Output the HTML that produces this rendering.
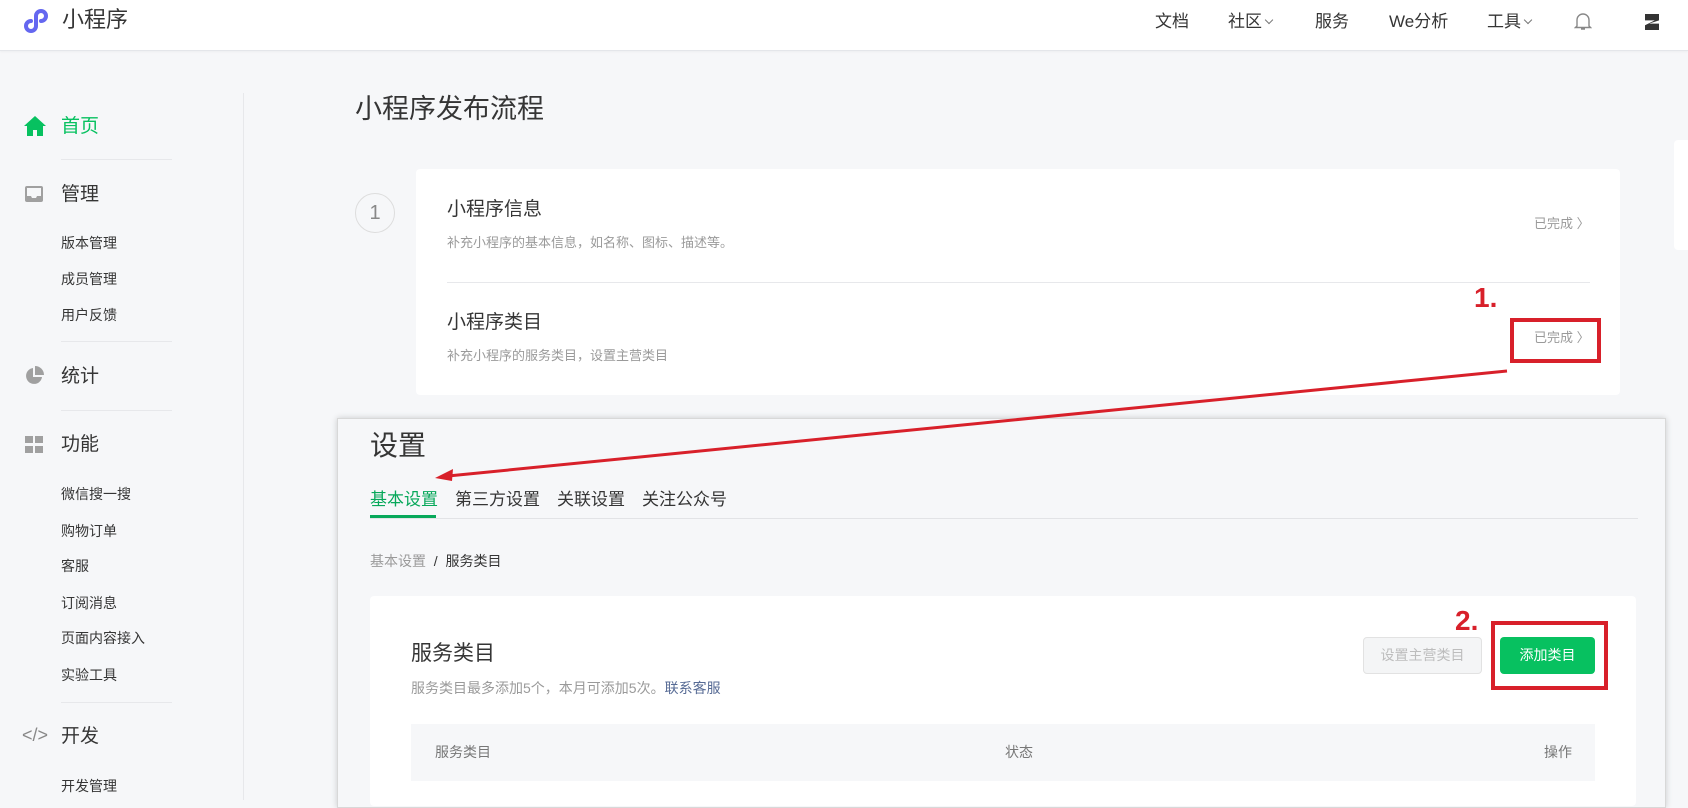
<!DOCTYPE html>
<html><head><meta charset="utf-8"><style>
*{margin:0;padding:0;box-sizing:border-box}
body{width:1688px;height:800px;overflow:hidden;background:#f6f7f9;font-family:"Liberation Sans","Noto Sans CJK SC",sans-serif;color:#353535;position:relative}
.a{position:absolute;white-space:nowrap;line-height:1}
.hdr{position:absolute;left:0;top:0;width:1688px;height:51px;background:#fff;border-bottom:1px solid #e4e6ea;box-shadow:0 1px 2px rgba(0,0,0,.04)}
.nav{font-size:17px;color:#353535;top:13px}
.car{display:inline-block;width:6px;height:6px;border-right:1px solid #777;border-bottom:1px solid #777;transform:rotate(45deg);margin-left:4px;position:relative;top:-4px}
.m{font-size:19px;color:#353535}
.s{font-size:14px;color:#353535}
.dv{position:absolute;left:61px;width:111px;height:1px;background:#e7e8eb}
.gray{color:#9a9a9a}
</style></head><body>
<div class="hdr"></div>
<svg class="a" style="left:22px;top:5px" width="32" height="32" viewBox="0 0 32 32"><path d="M9 16a5 5 0 1 0 5 5V11a5 5 0 1 1 5 5" fill="none" stroke="#6467f0" stroke-width="4" stroke-linecap="round"/></svg>
<div class="a" style="left:62px;top:9px;font-size:22px;color:#353535">小程序</div>
<div class="a nav" style="left:1155px">文档</div>
<div class="a nav" style="left:1228px">社区<span class="car"></span></div>
<div class="a nav" style="left:1315px">服务</div>
<div class="a nav" style="left:1389px">We分析</div>
<div class="a nav" style="left:1487px">工具<span class="car"></span></div>
<svg class="a" style="left:1574px;top:11px" width="18" height="20" viewBox="0 0 18 20"><path d="M3 15V9a6 6 0 0 1 12 0v6l1.5 1.5h-15zM7 18h4" fill="none" stroke="#888" stroke-width="1.4"/></svg>
<div class="a" style="left:1645px;top:14px;width:14px;height:16px;background:#333;clip-path:polygon(0 0,100% 0,100% 40%,30% 60%,100% 60%,100% 100%,0 100%,0 70%,70% 40%,0 40%)"></div>

<div class="a" style="left:243px;top:93px;width:1px;height:707px;background:#e7e8eb"></div>
<svg class="a" style="left:24px;top:115px" width="22" height="22" viewBox="0 0 22 22"><path d="M11 1L0 11h3v10h6v-6h4v6h6V11h3z" fill="#07c160"/></svg>
<div class="a m" style="left:61px;top:117px;color:#07c160">首页</div>
<div class="dv" style="top:159px"></div>
<svg class="a" style="left:24px;top:185px" width="20" height="18" viewBox="0 0 20 18"><path d="M1 3a2 2 0 0 1 2-2h14a2 2 0 0 1 2 2v12a2 2 0 0 1-2 2H3a2 2 0 0 1-2-2z" fill="#a0a0a0"/><path d="M3 3h14v8h-4l-1 2H8l-1-2H3z" fill="#f6f7f9"/></svg>
<div class="a m" style="left:61px;top:185px">管理</div>
<div class="a s" style="left:61px;top:236px">版本管理</div>
<div class="a s" style="left:61px;top:272px">成员管理</div>
<div class="a s" style="left:61px;top:308px">用户反馈</div>
<div class="dv" style="top:341px"></div>
<svg class="a" style="left:24px;top:366px" width="20" height="20" viewBox="0 0 20 20"><path d="M9 2a8 8 0 1 0 9 9H9z" fill="#a0a0a0"/><path d="M11 0a9 9 0 0 1 9 9h-9z" fill="#a0a0a0"/></svg>
<div class="a m" style="left:61px;top:367px">统计</div>
<div class="dv" style="top:410px"></div>
<svg class="a" style="left:25px;top:436px" width="18" height="18" viewBox="0 0 18 18"><rect width="8" height="7" fill="#a0a0a0"/><rect x="10" width="8" height="7" fill="#a0a0a0"/><rect y="10" width="8" height="7" fill="#a0a0a0"/><rect x="10" y="10" width="8" height="7" fill="#a0a0a0"/></svg>
<div class="a m" style="left:61px;top:435px">功能</div>
<div class="a s" style="left:61px;top:487px">微信搜一搜</div>
<div class="a s" style="left:61px;top:524px">购物订单</div>
<div class="a s" style="left:61px;top:559px">客服</div>
<div class="a s" style="left:61px;top:596px">订阅消息</div>
<div class="a s" style="left:61px;top:631px">页面内容接入</div>
<div class="a s" style="left:61px;top:668px">实验工具</div>
<div class="dv" style="top:702px"></div>
<div class="a" style="left:22px;top:726px;font-size:18px;color:#888">&lt;/&gt;</div>
<div class="a m" style="left:61px;top:727px">开发</div>
<div class="a s" style="left:61px;top:779px">开发管理</div>

<div class="a" style="left:355px;top:96px;font-size:27px;color:#353535">小程序发布流程</div>
<div class="a" style="left:355px;top:193px;width:40px;height:40px;border:1px solid #ddd;border-radius:50%;font-size:20px;color:#888;text-align:center;line-height:38px">1</div>
<div class="a" style="left:416px;top:169px;width:1204px;height:226px;background:#fff;border-radius:4px"></div>
<div class="a" style="left:447px;top:200px;font-size:19px">小程序信息</div>
<div class="a gray" style="left:447px;top:236px;font-size:13px">补充小程序的基本信息，如名称、图标、描述等。</div>
<div class="a" style="left:447px;top:282px;width:1143px;height:1px;background:#e7e8eb"></div>
<div class="a" style="left:447px;top:313px;font-size:19px">小程序类目</div>
<div class="a gray" style="left:447px;top:349px;font-size:13px">补充小程序的服务类目，设置主营类目</div>
<div class="a gray" style="left:1534px;top:217px;font-size:13px">已完成 〉</div>
<div class="a gray" style="left:1534px;top:331px;font-size:13px">已完成 〉</div>
<div class="a" style="left:1674px;top:140px;width:20px;height:110px;background:#fff;border-radius:4px"></div>
<div class="a" style="left:1510px;top:318px;width:91px;height:45px;border:4px solid #d8202a"></div>
<div class="a" style="left:1474px;top:284px;font-size:28px;font-weight:bold;color:#d8202a">1.</div>

<div class="a" style="left:337px;top:418px;width:1329px;height:390px;background:#f6f7f9;border:1px solid #d8d8d8;box-shadow:0 0 6px rgba(0,0,0,.18)"></div>
<div class="a" style="left:370px;top:432px;font-size:28px">设置</div>
<div class="a" style="left:370px;top:518px;width:1268px;height:1px;background:#e2e3e6"></div>
<div class="a" style="left:370px;top:491px;font-size:17px;color:#07a85a">基本设置</div>
<div class="a" style="left:370px;top:515px;width:66px;height:3px;background:#07a85a"></div>
<div class="a" style="left:455px;top:491px;font-size:17px">第三方设置</div>
<div class="a" style="left:557px;top:491px;font-size:17px">关联设置</div>
<div class="a" style="left:642px;top:491px;font-size:17px">关注公众号</div>
<div class="a" style="left:370px;top:554px;font-size:14px"><span class="gray">基本设置</span>&nbsp;&nbsp;/&nbsp;&nbsp;服务类目</div>
<div class="a" style="left:370px;top:596px;width:1266px;height:210px;background:#fff;border-radius:4px"></div>
<div class="a" style="left:411px;top:643px;font-size:21px">服务类目</div>
<div class="a gray" style="left:411px;top:681px;font-size:14px">服务类目最多添加5个，本月可添加5次。<span style="color:#576b95">联系客服</span></div>
<div class="a" style="left:1363px;top:637px;width:119px;height:37px;background:#f4f5f6;border:1px solid #e2e2e2;border-radius:4px;color:#bdbdbd;font-size:14px;text-align:center;line-height:35px">设置主营类目</div>
<div class="a" style="left:1500px;top:637px;width:95px;height:37px;background:#07c160;border-radius:4px;color:#fff;font-size:14px;text-align:center;line-height:37px">添加类目</div>
<div class="a" style="left:1491px;top:621px;width:117px;height:69px;border:4px solid #d8202a"></div>
<div class="a" style="left:1455px;top:607px;font-size:28px;font-weight:bold;color:#d8202a">2.</div>
<div class="a" style="left:411px;top:724px;width:1184px;height:57px;background:#f6f7f9"></div>
<div class="a gray" style="left:435px;top:745px;font-size:14px;color:#777">服务类目</div>
<div class="a" style="left:1005px;top:745px;font-size:14px;color:#777">状态</div>
<div class="a" style="left:1544px;top:745px;font-size:14px;color:#777">操作</div>

<svg class="a" style="left:0;top:0" width="1688" height="800"><line x1="1507" y1="371" x2="448" y2="476" stroke="#d8202a" stroke-width="3"/><path d="M435 478l18-9-1 12z" fill="#d8202a"/></svg>
</body></html>
